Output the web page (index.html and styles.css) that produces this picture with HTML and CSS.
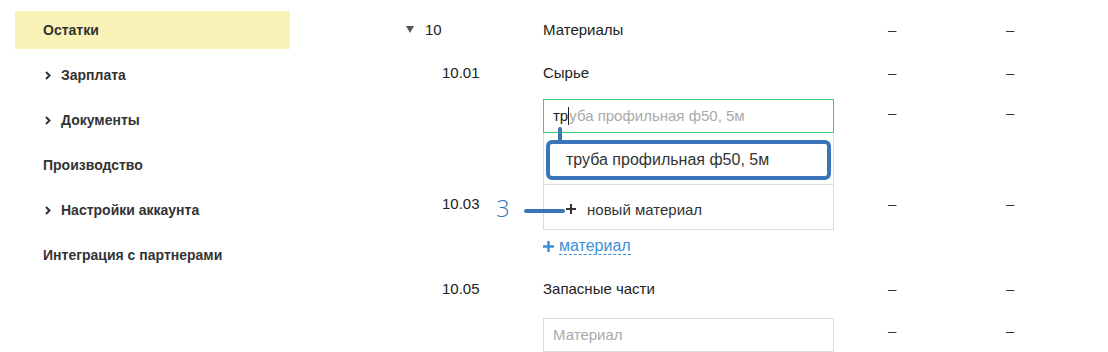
FILE: index.html
```html
<!DOCTYPE html>
<html>
	<head>
		<meta charset="utf-8">
		<title>Остатки</title>
		<link rel="stylesheet" href="styles.css">
	</head>
	<body>
		<div class="page">
			<ul class="side">
				<li class="side-item active">Остатки</li>
				<li class="side-item"><svg class="chev" width="6" height="9" viewBox="0 0 6 9"><path d="M1 1l3.5 3.5L1 8" fill="none" stroke="#333" stroke-width="2"/></svg>Зарплата</li>
				<li class="side-item"><svg class="chev" width="6" height="9" viewBox="0 0 6 9"><path d="M1 1l3.5 3.5L1 8" fill="none" stroke="#333" stroke-width="2"/></svg>Документы</li>
				<li class="side-item">Производство</li>
				<li class="side-item"><svg class="chev" width="6" height="9" viewBox="0 0 6 9"><path d="M1 1l3.5 3.5L1 8" fill="none" stroke="#333" stroke-width="2"/></svg>Настройки аккаунта</li>
				<li class="side-item">Интеграция с партнерами</li>
			</ul>

			<div class="table">
				<div class="row">
					<div class="code top"><span class="tri"></span>10</div>
					<div class="name">Материалы</div>
					<div class="val">–</div>
					<div class="val">–</div>
				</div>
				<div class="row">
					<div class="code">10.01</div>
					<div class="name">Сырье</div>
					<div class="val">–</div>
					<div class="val">–</div>
				</div>
				<div class="row">
					<div class="code"></div>
					<div class="name">
						<div class="combo">
							<div class="input focus"><span class="typed">тр</span><span class="caret"></span><span class="hint">уба профильная ф50, 5м</span></div>
							<div class="dropdown">
								<div class="dd-item"><div class="dd-pick">труба профильная ф50, 5м</div></div>
								<div class="dd-item dd-new">
									<svg width="10" height="10" viewBox="0 0 10 10"><path d="M5 0v10M0 5h10" stroke="#333" stroke-width="2"/></svg>
									<span>новый материал</span>
								</div>
							</div>
							<span class="pin"></span>
							<span class="mark">3</span>
							<span class="mark-line"></span>
						</div>
					</div>
					<div class="val up">–</div>
					<div class="val up">–</div>
				</div>
				<div class="row spacer"></div>
				<div class="row">
					<div class="code">10.03</div>
					<div class="name"></div>
					<div class="val">–</div>
					<div class="val">–</div>
				</div>
				<div class="row short">
					<div class="code"></div>
					<div class="name">
						<span class="add"><svg width="11" height="11" viewBox="0 0 11 11"><path d="M5.5 0v11M0 5.5h11" stroke="#3b8fd8" stroke-width="2.4"/></svg><span class="add-text">материал</span></span>
					</div>
				</div>
				<div class="row short">
					<div class="code">10.05</div>
					<div class="name">Запасные части</div>
					<div class="val">–</div>
					<div class="val">–</div>
				</div>
				<div class="row last">
					<div class="code"></div>
					<div class="name"><div class="input"><span class="hint">Материал</span></div></div>
					<div class="val">–</div>
					<div class="val">–</div>
				</div>
			</div>
		</div>
	</body>
</html>
```

FILE: styles.css
```css
body {
	margin: 0;
	background: #fff;
	font-family: "Liberation Sans", Arial, sans-serif;
	font-size: 14px;
	color: #222;
	overflow: hidden;
}
.page {
	display: flex;
	gap: 105px;
	padding: 11px 0 0 15px;
}
.side {
	list-style: none;
	margin: 0;
	padding: 0;
	width: 275px;
	flex-shrink: 0;
	display: flex;
	flex-direction: column;
	gap: 7px;
}
.side-item {
	height: 38px;
	display: flex;
	align-items: center;
	padding-left: 28px;
	font-weight: bold;
	color: #333;
}
.side-item.active {
	background-color: #faf3b7;
}
.chev {
	margin: 0 10px 0 2px;
}
.table {
	margin-top: -3px;
	flex: 1;
	font-size: 15px;
}
.row {
	display: flex;
	height: 43px;
	align-items: center;
}
.row > div {
	flex-shrink: 0;
}
.row.spacer {
	height: 45px;
}
.row.short {
	height: 42px;
}
.code {
	width: 148px;
	padding-left: 47px;
	box-sizing: border-box;
}
.code.top {
	padding-left: 11px;
	display: flex;
	align-items: center;
}
.tri {
	width: 0;
	height: 0;
	border-left: 4px solid transparent;
	border-right: 4px solid transparent;
	border-top: 7px solid #555;
	margin-right: 11px;
}
.name {
	width: 345px;
}
.val {
	width: 118px;
	color: #333;
}
.val.up {
	align-self: flex-start;
	padding-top: 11px;
	line-height: 16px;
}
.combo {
	position: relative;
	width: 291px;
}
.input {
	height: 34px;
	box-sizing: border-box;
	border: 1px solid #ddd;
	padding-left: 9px;
	display: flex;
	align-items: center;
	width: 291px;
}
.input.focus {
	border-color: #3fcd6c;
}
.typed {
	color: #222;
}
.caret {
	width: 1px;
	height: 18px;
	background: #222;
}
.hint {
	color: #aaa;
}
.dropdown {
	position: absolute;
	left: 0;
	top: 34px;
	width: 291px;
	box-sizing: border-box;
	border: 1px solid #ddd;
	border-top: none;
	background: #fff;
	z-index: 5;
}
.dd-item {
	height: 52px;
	border-bottom: 1px solid #ddd;
	box-sizing: border-box;
	padding: 7px 2px 0 2px;
}
.dd-pick {
	height: 40px;
	box-sizing: border-box;
	border: 4px solid #3a75b9;
	border-radius: 6px;
	padding-left: 16px;
	display: flex;
	align-items: center;
	color: #333;
	font-size: 16px;
}
.dd-item.dd-new {
	height: 44px;
	padding: 5px 0 0 22px;
	display: flex;
	align-items: center;
	gap: 11px;
	border-bottom: none;
	color: #333;
}
.pin {
	position: absolute;
	left: 15px;
	top: 28px;
	width: 4px;
	height: 14px;
	border-radius: 2px 2px 0 0;
	background: #3a75b9;
	z-index: 6;
}
.mark {
	position: absolute;
	left: -47px;
	top: 95px;
	font-family: "Open Sans", sans-serif;
	font-weight: 300;
	font-size: 24px;
	line-height: 28px;
	color: #3a75b9;
	z-index: 6;
}
.mark-line {
	position: absolute;
	left: -19px;
	top: 110px;
	width: 41px;
	height: 4px;
	border-radius: 2px;
	background: #3a75b9;
	z-index: 6;
}
.add {
	display: inline-flex;
	align-items: center;
	gap: 5px;
	color: #3b8fd8;
	font-size: 16px;
}
.add-text {
	border-bottom: 1px dashed #3b8fd8;
	line-height: 16px;
}
.row.last .input {
	margin-top: 8px;
}
```
